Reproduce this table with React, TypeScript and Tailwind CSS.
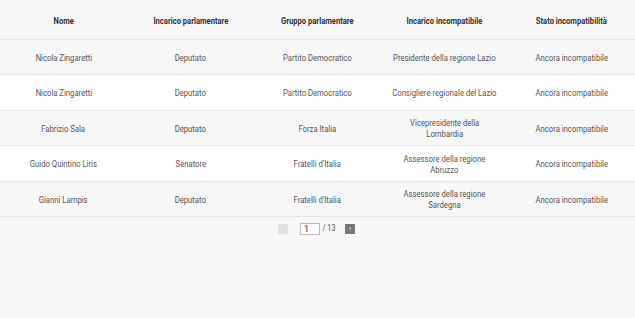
import React from "react";

type Row = { nome: string; incarico: string; gruppo: string; incompatibile: string[]; stato: string; h: string; bg: string };

const rows: Row[] = [
  { nome: "Nicola Zingaretti", incarico: "Deputato", gruppo: "Partito Democratico", incompatibile: ["Presidente della regione Lazio"], stato: "Ancora incompatibile", h: "h-[35px]", bg: "bg-[#f7f7f7]" },
  { nome: "Nicola Zingaretti", incarico: "Deputato", gruppo: "Partito Democratico", incompatibile: ["Consigliere regionale del Lazio"], stato: "Ancora incompatibile", h: "h-[36px]", bg: "bg-white" },
  { nome: "Fabrizio Sala", incarico: "Deputato", gruppo: "Forza Italia", incompatibile: ["Vicepresidente della", "Lombardia"], stato: "Ancora incompatibile", h: "h-[35px]", bg: "bg-[#f7f7f7]" },
  { nome: "Guido Quintino Liris", incarico: "Senatore", gruppo: "Fratelli d'Italia", incompatibile: ["Assessore della regione", "Abruzzo"], stato: "Ancora incompatibile", h: "h-[36px]", bg: "bg-white" },
  { nome: "Gianni Lampis", incarico: "Deputato", gruppo: "Fratelli d'Italia", incompatibile: ["Assessore della regione", "Sardegna"], stato: "Ancora incompatibile", h: "h-[35px]", bg: "bg-[#f7f7f7]" },
];

const headers = ["Nome", "Incarico parlamentare", "Gruppo parlamentare", "Incarico incompatibile", "Stato incompatibilità"];

function Cell({ lines }: { lines: string[] }) {
  return (
    <div className="flex items-center justify-center text-center">
      <span className="inline-block whitespace-nowrap scale-x-[0.81] text-[9.5px] leading-[11px] text-[#555]">
        {lines.map((l, k) => (
          <React.Fragment key={k}>
            {k > 0 && <br />}
            {l}
          </React.Fragment>
        ))}
      </span>
    </div>
  );
}

export default function App() {
  return (
    <div className="w-[635px] h-[318px] bg-[#f7f7f7] font-['Roboto',sans-serif] overflow-hidden">
      <div className="grid grid-cols-5 h-[40px] pt-[3px] border-b border-[#e6e6e6]">
        {headers.map((h) => (
          <div key={h} className="flex items-center justify-center text-center">
            <span className="inline-block whitespace-nowrap scale-x-[0.8] text-[9.5px] font-bold text-[#333]">{h}</span>
          </div>
        ))}
      </div>
      {rows.map((r, i) => (
        <div key={i} className={`grid grid-cols-5 border-b border-[#e6e6e6] ${r.h} ${r.bg}`}>
          <Cell lines={[r.nome]} />
          <Cell lines={[r.incarico]} />
          <Cell lines={[r.gruppo]} />
          <Cell lines={r.incompatibile} />
          <Cell lines={[r.stato]} />
        </div>
      ))}
      <div className="flex items-center justify-center mt-[6px] h-[12px] pr-[2px]">
        <button className="w-[10px] h-[10px] bg-[#e2e2e2] text-[7px] leading-[10px] text-[#c8c8c8] flex items-center justify-center">‹</button>
        <input
          readOnly
          value="1"
          className="ml-[12px] w-[20px] h-[12px] bg-white border border-[#bdbdbd] text-[9px] leading-[10px] pl-[3px] text-[#333] outline-none font-['Roboto',sans-serif]"
        />
        <span className="ml-[1px] inline-block whitespace-nowrap scale-x-[0.8] text-[9px] text-[#555]">/ 13</span>
        <button className="ml-[8px] w-[10px] h-[10px] bg-[#787878] text-[7px] leading-[10px] text-white flex items-center justify-center">›</button>
      </div>
    </div>
  );
}
